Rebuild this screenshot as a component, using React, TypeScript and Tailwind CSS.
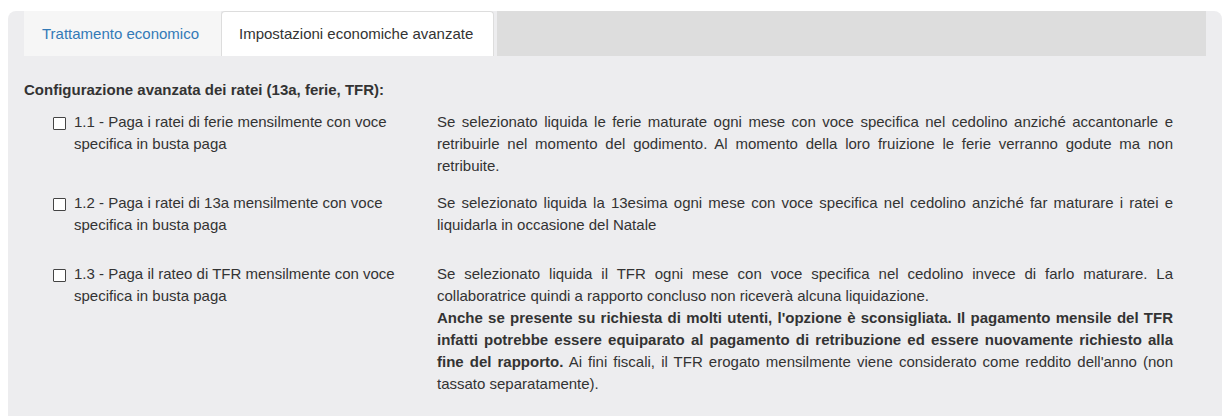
import React from 'react';

type Row = {
  id: string;
  label: string;
  description: React.ReactNode;
};

const rows: Row[] = [
  {
    id: 'ferie',
    label: '1.1 - Paga i ratei di ferie mensilmente con voce specifica in busta paga',
    description:
      'Se selezionato liquida le ferie maturate ogni mese con voce specifica nel cedolino anziché accantonarle e retribuirle nel momento del godimento. Al momento della loro fruizione le ferie verranno godute ma non retribuite.',
  },
  {
    id: 'tredicesima',
    label: '1.2 - Paga i ratei di 13a mensilmente con voce specifica in busta paga',
    description:
      'Se selezionato liquida la 13esima ogni mese con voce specifica nel cedolino anziché far maturare i ratei e liquidarla in occasione del Natale',
  },
  {
    id: 'tfr',
    label: '1.3 - Paga il rateo di TFR mensilmente con voce specifica in busta paga',
    description: (
      <>
        Se selezionato liquida il TFR ogni mese con voce specifica nel cedolino invece di farlo maturare. La
        collaboratrice quindi a rapporto concluso non riceverà alcuna liquidazione.
        <br />
        <b>
          Anche se presente su richiesta di molti utenti, l'opzione è sconsigliata. Il pagamento mensile del TFR
          infatti potrebbe essere equiparato al pagamento di retribuzione ed essere nuovamente richiesto alla fine
          del rapporto.
        </b>{' '}
        Ai fini fiscali, il TFR erogato mensilmente viene considerato come reddito dell'anno (non tassato
        separatamente).
      </>
    ),
  },
];

export default function App() {
  return (
    <div className="bg-white pt-[11px] pl-2 pr-px font-['Liberation_Sans',Arial,sans-serif] text-[15px] leading-[22px] text-[#333]">
      <div className="min-h-[405px] rounded-t-lg bg-[#ededef] px-4 pb-4">
        <div className="flex h-[45px]">
          <div className="flex h-full w-[197px] items-center bg-[#f6f6f6] pl-[18px] text-[#337ab7]">
            Trattamento economico
          </div>
          <div className="flex h-full w-[273px] items-center rounded-t border border-b-0 border-[#dddddd] bg-white pl-[17px]">
            Impostazioni economiche avanzate
          </div>
          <div className="ml-[3px] h-full flex-1 bg-[#dddddd]" />
        </div>

        <h4 className="mt-[23px] font-bold">Configurazione avanzata dei ratei (13a, ferie, TFR):</h4>

        <div className="mt-[10px]">
          {rows.map((row) => (
            <div key={row.id} className="mb-[15px] flex min-h-[56px]">
              <label htmlFor={row.id} className="flex w-[398px] shrink-0 pl-[29px] pr-[20px]">
                <input
                  id={row.id}
                  type="checkbox"
                  className="mt-[6px] mr-[8px] h-[13px] w-[13px] shrink-0 appearance-none rounded-[1px] border border-[#444] bg-white"
                />
                <span>{row.label}</span>
              </label>
              <div className="ml-[15px] w-[736px] text-justify">{row.description}</div>
            </div>
          ))}
        </div>
      </div>
    </div>
  );
}
